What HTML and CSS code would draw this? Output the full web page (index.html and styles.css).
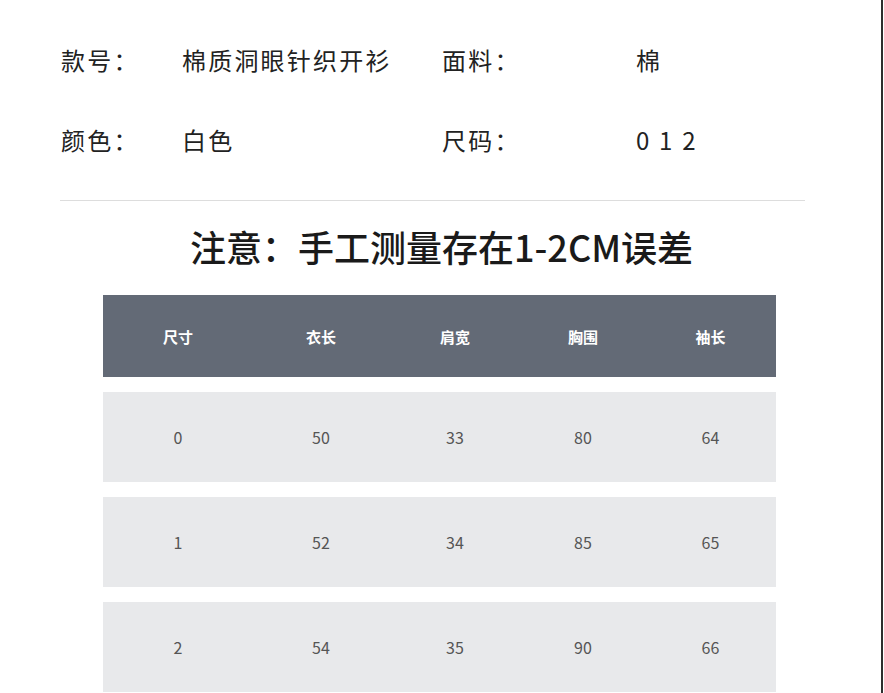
FILE: index.html
```html
<!DOCTYPE html>
<html lang="zh-CN">
<head>
<meta charset="utf-8">
<title>尺码信息</title>
<link rel="stylesheet" href="styles.css">
</head>
<body>
<div class="page">
  <div class="info">
    <div class="label">款号：</div>
    <div class="value">棉质洞眼针织开衫</div>
    <div class="label">面料：</div>
    <div class="value">棉</div>
    <div class="label">颜色：</div>
    <div class="value">白色</div>
    <div class="label">尺码：</div>
    <div class="value">0 1 2</div>
  </div>
  <div class="divider"></div>
  <h1 class="title">注意：手工测量存在1-2CM误差</h1>
  <div class="table">
    <div class="row head">
      <div>尺寸</div><div>衣长</div><div>肩宽</div><div>胸围</div><div>袖长</div>
    </div>
    <div class="row">
      <div>0</div><div>50</div><div>33</div><div>80</div><div>64</div>
    </div>
    <div class="row">
      <div>1</div><div>52</div><div>34</div><div>85</div><div>65</div>
    </div>
    <div class="row">
      <div>2</div><div>54</div><div>35</div><div>90</div><div>66</div>
    </div>
  </div>
</div>
</body>
</html>
```

FILE: styles.css
```css
html, body {
  margin: 0;
  padding: 0;
  background: #ffffff;
}

body {
  font-family: "Noto Sans CJK SC", "Noto Sans", sans-serif;
  color: #222222;
}

.page {
  width: 100%;
  height: 100vh;
  box-sizing: border-box;
  padding-top: 42px;
  padding-right: 1px;
  overflow: hidden;
  position: relative;
}

.page::after {
  content: "";
  position: absolute;
  top: 0;
  bottom: 0;
  right: 1px;
  width: 2px;
  background: #2e2e2e;
}

.info {
  display: grid;
  grid-template-columns: 121px 260px 194px auto;
  row-gap: 44px;
  padding-left: 61px;
  font-size: 24px;
  line-height: 36px;
  letter-spacing: 2.2px;
}

.divider {
  margin: 42px 0 0 60px;
  width: 745px;
  height: 1px;
  background: #dddddd;
}

.title {
  margin: 23px 0 0 0;
  text-align: center;
  font-size: 36px;
  line-height: 44px;
  font-weight: 500;
  color: #1a1a1a;
}

.table {
  margin: 27px 0 0 103px;
  width: 673px;
  display: flex;
  flex-direction: column;
  gap: 15px;
}

.row {
  display: grid;
  grid-template-columns: 150px 136px 132px 124px 131px;
  height: 90px;
  align-items: center;
  background: #e8e9eb;
  color: #555555;
  font-size: 16px;
}

.row > div {
  text-align: center;
}

.row.head {
  height: 82px;
  background: #636a76;
  color: #ffffff;
  font-size: 15px;
  font-weight: 700;
}
```
